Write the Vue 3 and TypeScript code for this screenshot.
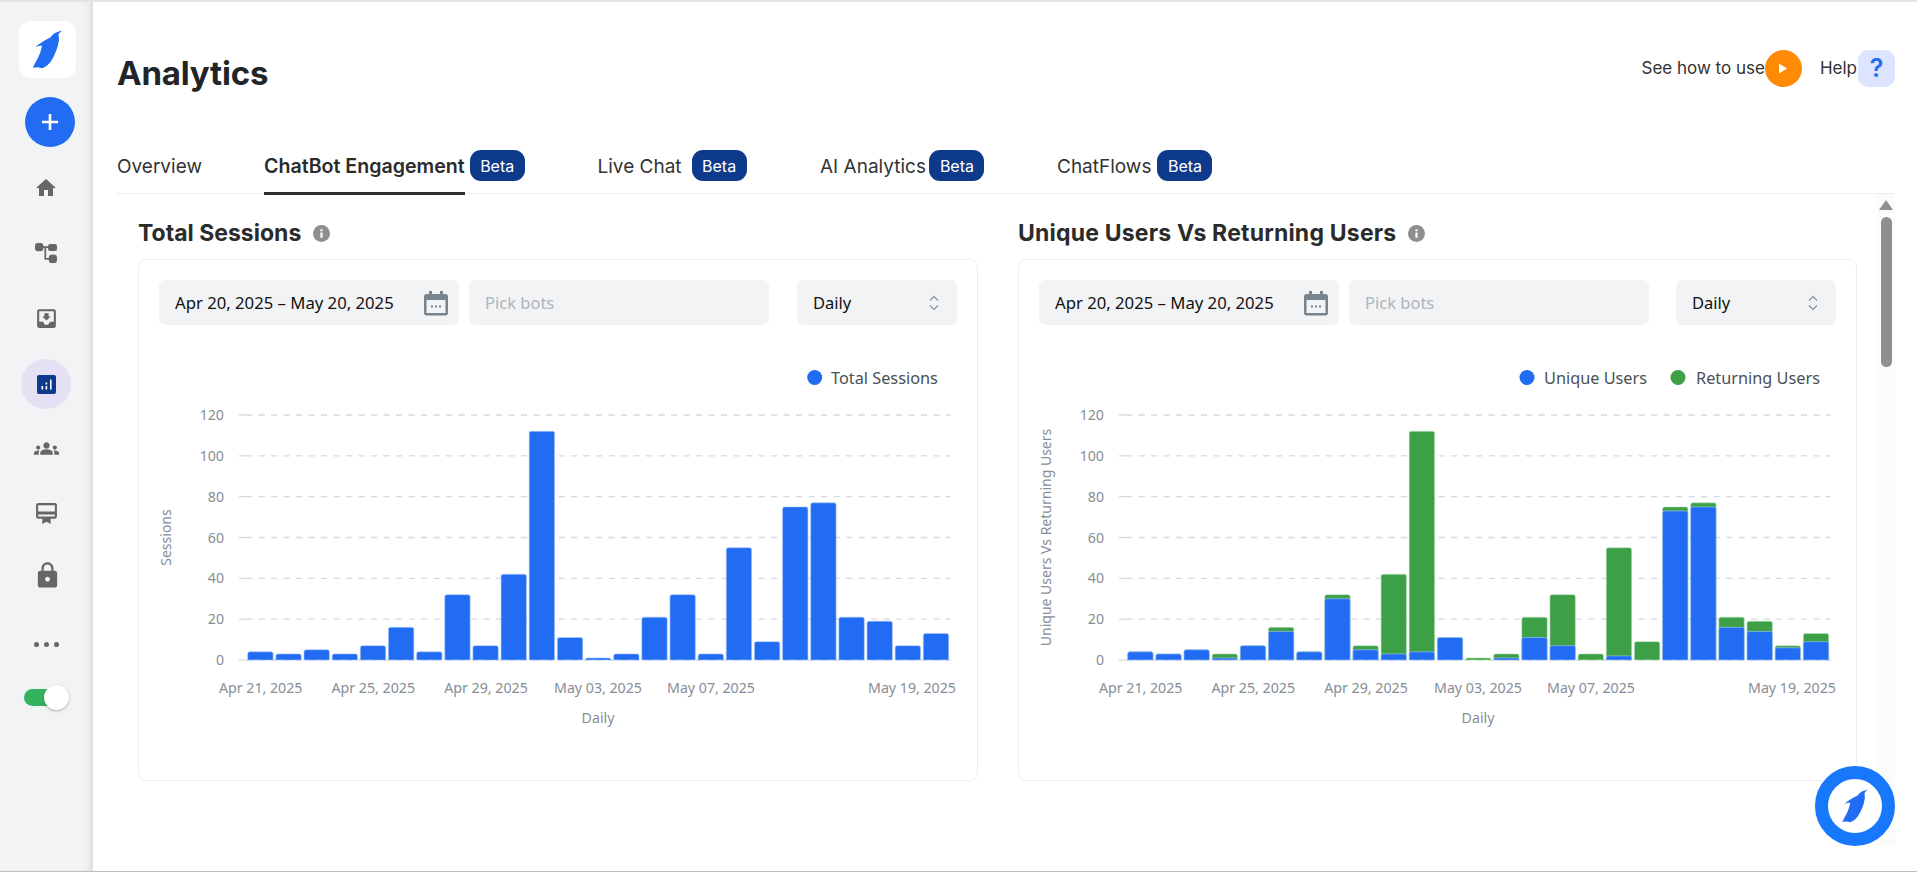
<script setup lang="ts">
interface Panel {
    title: string;
    yLabel: string;
    legend: { label: string; color: string; dot: number; text: number }[];
    unique?: number[];
}

const BLUE = '#226cf3';
const GREEN = '#3da047';

// chart geometry, in svg px
const baseY = 335;
const perUnit = 245 / 120;
const firstBar = 88.7;
const barStep = 28.15;
const barWidth = 25.4;

const totals = [4, 3, 5, 3, 7, 16, 4, 32, 7, 42, 112, 11, 1, 3, 21, 32, 3, 55, 9, 75, 77, 21, 19, 7, 13];
const unique = [4, 3, 5, 1, 7, 14, 4, 30, 5, 3, 4, 11, 0, 1, 11, 7, 0, 2, 0, 73, 75, 16, 14, 6, 9];

const yTicks = [120, 100, 80, 60, 40, 20, 0];
const xTicks = [
    { label: 'Apr 21, 2025', x: 101.7 },
    { label: 'Apr 25, 2025', x: 214.3 },
    { label: 'Apr 29, 2025', x: 327 },
    { label: 'May 03, 2025', x: 439 },
    { label: 'May 07, 2025', x: 552 },
    { label: 'May 19, 2025', x: 753 },
];

const panels: Panel[] = [
    {
        title: 'Total Sessions',
        yLabel: 'Sessions',
        legend: [{ label: 'Total Sessions', color: BLUE, dot: 655.7, text: 672 }],
    },
    {
        title: 'Unique Users Vs Returning Users',
        yLabel: 'Unique Users Vs Returning Users',
        legend: [
            { label: 'Unique Users', color: BLUE, dot: 488, text: 505 },
            { label: 'Returning Users', color: GREEN, dot: 639, text: 657 },
        ],
        unique,
    },
];

const tabs = [
    { label: 'Overview', cls: 'tab-overview' },
    { label: 'ChatBot Engagement', cls: 'tab-chatbot', beta: true, active: true },
    { label: 'Live Chat', cls: 'tab-live', beta: true },
    { label: 'AI Analytics', cls: 'tab-ai', beta: true },
    { label: 'ChatFlows', cls: 'tab-flows', beta: true },
];

const penguin =
    'M96 7 L75 15 Q66 20 62 28 Q48 35 40 40 Q27 48 15 58 Q28 53 36 54 Q33 72 24 90 Q18 100 8 120 L25 119 L34 122 Q50 118 62 102 Q82 72 87 38 Q88 26 85 20 Z';

const yOf = (value: number) => baseY - value * perUnit;

// bar with rounded top corners
const barPath = (index: number, value: number) => {
    const x = firstBar + index * barStep;
    const top = yOf(value);
    const r = Math.min(2, value * perUnit);
    return `M${x} ${baseY}V${top + r}Q${x} ${top} ${x + r} ${top}H${x + barWidth - r}Q${x + barWidth} ${top} ${x + barWidth} ${top + r}V${baseY}Z`;
};
</script>

<template>
    <div class="app">
        <aside class="sidebar">
            <div class="logo">
                <svg width="35" height="43" viewBox="0 0 105 130"><path :d="penguin" fill="#226cf3" /></svg>
            </div>
            <button class="add-btn" type="button">
                <svg width="20" height="20" viewBox="0 0 20 20"><path d="M10 2v16M2 10h16" stroke="#fff" stroke-width="2.6" /></svg>
            </button>
            <nav class="nav">
                <svg class="n-home" width="24" height="24" viewBox="0 0 24 24"><path d="M10 20v-6h4v6h5v-8h3L12 3 2 12h3v8z" /></svg>
                <svg class="n-flow" width="22" height="20" viewBox="0 0 64 58">
                    <rect x="0" y="0" width="24" height="24" rx="8" />
                    <rect x="38" y="3" width="26" height="20" rx="6" />
                    <rect x="40" y="33" width="24" height="26" rx="10" />
                    <path d="M20 12H42M30 12V46H44" fill="none" stroke="#666" stroke-width="5" />
                </svg>
                <svg class="n-inbox" width="25" height="25" viewBox="0 0 24 24"><path d="M19 3H5c-1.1 0-2 .9-2 2v14c0 1.1.9 2 2 2h14c1.1 0 2-.9 2-2V5c0-1.1-.9-2-2-2zm0 12h-4c0 1.66-1.35 3-3 3s-3-1.34-3-3H4.99V5H19v10zm-3-5h-2V7h-4v3H8l4 4 4-4z" /></svg>
                <div class="n-active">
                    <svg width="19" height="19" viewBox="0 0 19 19">
                        <rect width="19" height="19" rx="2" fill="#0e3a8c" />
                        <path d="M4.5 11h1.6v3.5H4.5zM8.6 7.5h1.6v2H8.6zM8.6 11h1.6v3.5H8.6zM13 4.5h1.6v10H13z" fill="#fff" />
                    </svg>
                </div>
                <svg class="n-team" width="25" height="25" viewBox="0 0 24 24"><path d="M12 12.75c1.63 0 3.07.39 4.24.9 1.08.48 1.76 1.56 1.76 2.73V18H6v-1.61c0-1.18.68-2.26 1.76-2.73 1.17-.52 2.61-.91 4.24-.91zM4 13c1.1 0 2-.9 2-2s-.9-2-2-2-2 .9-2 2 .9 2 2 2zm1.13 1.1c-.37-.06-.74-.1-1.13-.1-.99 0-1.93.21-2.78.58C.48 14.9 0 15.62 0 16.43V18h4.5v-1.61c0-.83.23-1.61.63-2.29zM20 13c1.1 0 2-.9 2-2s-.9-2-2-2-2 .9-2 2 .9 2 2 2zm4 3.43c0-.81-.48-1.53-1.22-1.85-.85-.37-1.79-.58-2.78-.58-.39 0-.76.04-1.13.1.4.68.63 1.46.63 2.29V18H24v-1.57zM12 6c1.66 0 3 1.34 3 3s-1.34 3-3 3-3-1.34-3-3 1.34-3 3-3z" /></svg>
                <svg class="n-card" width="25" height="25" viewBox="0 0 24 24"><path d="M20 2H4c-1.11 0-2 .89-2 2v11c0 1.11.89 2 2 2h4v5l4-2 4 2v-5h4c1.11 0 2-.89 2-2V4c0-1.11-.89-2-2-2zm0 13H4v-2h16v2zm0-5H4V4h16v6z" /></svg>
                <svg class="n-lock" width="29" height="29" viewBox="0 0 24 24"><path d="M18 8h-1V6c0-2.76-2.24-5-5-5S7 3.24 7 6v2H6c-1.1 0-2 .9-2 2v10c0 1.1.9 2 2 2h12c1.1 0 2-.9 2-2V10c0-1.1-.9-2-2-2zm-6 9c-1.1 0-2-.9-2-2s.9-2 2-2 2 .9 2 2-.9 2-2 2zm3.1-9H8.9V6c0-1.71 1.39-3.1 3.1-3.1 1.71 0 3.1 1.39 3.1 3.1v2z" /></svg>
                <div class="n-dots"><i></i><i></i><i></i></div>
            </nav>
            <div class="toggle"><span class="knob"></span></div>
        </aside>

        <main class="main">
            <header class="header">
                <h1>Analytics</h1>
                <div class="header-actions">
                    <span>See how to use</span>
                    <span class="play">
                        <svg width="10" height="11" viewBox="0 0 10 11"><path d="M1 0.5 9 5.5 1 10.5Z" fill="#fff" /></svg>
                    </span>
                    <span class="help-label">Help</span>
                    <span class="help">?</span>
                </div>
            </header>

            <div class="tabs">
                <div v-for="tab in tabs" :key="tab.label" class="tab" :class="tab.cls">
                    <span class="tab-label" :class="{ active: tab.active }">{{ tab.label }}</span>
                    <span v-if="tab.beta" class="beta">Beta</span>
                </div>
            </div>

            <div class="content">
                <div class="panels">
                    <section v-for="panel in panels" :key="panel.title" class="panel">
                        <h2>
                            {{ panel.title }}
                            <svg width="17" height="17" viewBox="0 0 17 17">
                                <circle cx="8.5" cy="8.5" r="8.5" fill="#8f8f8f" />
                                <path d="M7.4 7.4h2.2v5.4H7.4zM7.4 4.2h2.2v2H7.4z" fill="#fff" />
                            </svg>
                        </h2>
                        <div class="card">
                            <div class="controls">
                                <div class="field date">
                                    <span>Apr 20, 2025 – May 20, 2025</span>
                                    <svg width="24" height="26" viewBox="0 0 24 26">
                                        <path d="M5 1h3v3h8V1h3v3h2.5A2.5 2.5 0 0 1 24 6.500V23a2.500 2.500 0 0 1-2.500 2.500h-19A2.500 2.500 0 0 1 0 23V6.500A2.500 2.500 0 0 1 2.500 4H5zM2.500 10v13h19V10z" fill="#7a848d" />
                                        <path d="M7 15.500h2v2H7zM11 15.500h2v2h-2zM15 15.500h2v2h-2z" fill="#7a848d" />
                                    </svg>
                                </div>
                                <div class="field bots">Pick bots</div>
                                <div class="field daily">
                                    <span>Daily</span>
                                    <svg width="12" height="18" viewBox="0 0 12 18"><path d="M2 6.500 6 2.500 10 6.500M2 11.500 6 15.500 10 11.500" fill="none" stroke="#868e96" stroke-width="1.100" /></svg>
                                </div>
                            </div>

                            <svg class="chart" width="797" height="434" viewBox="0 0 797 434">
                                <g v-for="item in panel.legend" :key="item.label">
                                    <circle :cx="item.dot" cy="52.500" r="7.500" :fill="item.color" />
                                    <text :x="item.text" y="59" class="legend-text">{{ item.label }}</text>
                                </g>

                                <g v-for="tick in yTicks" :key="tick">
                                    <line x1="80" x2="87" :y1="yOf(tick)" :y2="yOf(tick)" class="grid-tick" />
                                    <line x1="87" x2="791.700" :y1="yOf(tick)" :y2="yOf(tick)" class="grid-line" />
                                    <text x="65" :y="yOf(tick) + 5" text-anchor="end" class="axis-text">{{ tick }}</text>
                                </g>

                                <text :transform="`translate(12 212.500) rotate(-90)`" text-anchor="middle" class="axis-text small">{{ panel.yLabel }}</text>

                                <g v-for="(total, i) in totals" :key="i" class="bar">
                                    <template v-if="panel.unique">
                                        <path :d="barPath(i, total)" fill="#3da047" stroke="#b7e3bd" />
                                        <path v-if="panel.unique[i] > 0" :d="barPath(i, panel.unique[i])" fill="#226cf3" stroke="#a9c8fb" />
                                    </template>
                                    <path v-else :d="barPath(i, total)" fill="#226cf3" stroke="#a9c8fb" />
                                </g>

                                <text v-for="tick in xTicks" :key="tick.label" :x="tick.x" y="368" text-anchor="middle" class="axis-text">{{ tick.label }}</text>
                                <text x="439" y="397.500" text-anchor="middle" class="axis-text">Daily</text>
                            </svg>
                        </div>
                    </section>
                </div>

                <div class="rail">
                    <svg width="14" height="10" viewBox="0 0 14 10"><path d="M7 0 14 10H0Z" fill="#8f8f8f" /></svg>
                    <div class="thumb"></div>
                </div>
            </div>
        </main>

        <div class="chat-bubble">
            <svg width="30" height="38" viewBox="0 0 105 130"><path :d="penguin" fill="#226cf3" /></svg>
        </div>
    </div>
</template>

<style>
html,
body {
    margin: 0;
    height: 100%;
    overflow: hidden;
    background: #fff;
}
</style>

<style scoped>
.app {
    position: relative;
    display: flex;
    box-sizing: border-box;
    width: 1917px;
    height: 872px;
    border-top: 2px solid #e4e4e4;
    border-bottom: 1px solid #bdbdbd;
    font-family: 'Noto Sans', sans-serif;
    overflow: hidden;
}

.sidebar {
    display: flex;
    flex-direction: column;
    align-items: center;
    box-sizing: border-box;
    width: 93px;
    flex-shrink: 0;
    padding-top: 19px;
    background: #f1f3f5;
    box-shadow: inset -6px 0 6px -4px rgba(0, 0, 0, 0.12);
}

.logo {
    display: flex;
    align-items: center;
    justify-content: center;
    width: 57px;
    height: 57px;
    margin-left: 2px;
    border-radius: 12px;
    background: #fff;
}

.add-btn {
    display: flex;
    align-items: center;
    justify-content: center;
    width: 50px;
    height: 50px;
    margin: 19px 0 0 7px;
    padding: 0;
    border: none;
    border-radius: 50%;
    background: #226cf3;
}

.nav {
    display: flex;
    flex-direction: column;
    align-items: center;
    margin-right: 1px;
    fill: #666;
}

.n-home { margin-top: 29px; }
.n-flow { margin-top: 43px; }
.n-inbox { margin-top: 43px; }
.n-active {
    display: flex;
    align-items: center;
    justify-content: center;
    width: 50px;
    height: 50px;
    margin-top: 28px;
    border-radius: 50%;
    background: #e5e0f3;
}
.n-team { margin-top: 27px; }
.n-card { margin-top: 40px; }
.n-lock { margin: 35px 0 0 2px; }
.n-dots {
    display: flex;
    gap: 5px;
    margin-top: 52px;
}
.n-dots i {
    width: 5px;
    height: 5px;
    border-radius: 50%;
    background: #666;
}

.toggle {
    display: flex;
    align-items: center;
    width: 45px;
    height: 17px;
    margin-top: 42px;
    border-radius: 9px;
    background: linear-gradient(to right, #34b35f 80%, transparent 80%);
}
.knob {
    width: 25px;
    height: 25px;
    margin-left: 20px;
    border-radius: 50%;
    background: #fff;
    box-shadow: 0 1px 3px rgba(0, 0, 0, 0.3);
}

.main {
    flex: 1;
    min-width: 0;
    padding: 0 22px 0 24px;
}

.header {
    display: flex;
    justify-content: space-between;
    height: 148px;
    color: #222;
}

h1 {
    margin: 51px 0 0;
    font: 700 33px/40px Inter, sans-serif;
    letter-spacing: -0.2px;
    color: #212529;
}

.header-actions {
    display: flex;
    align-items: flex-start;
    height: 37px;
    margin-top: 48px;
    font: 400 17px/37px Inter, sans-serif;
    color: #333;
}

.play {
    display: flex;
    align-items: center;
    justify-content: center;
    width: 37px;
    height: 37px;
    border-radius: 50%;
    background: #ff8a05;
}

.help-label {
    margin-left: 18px;
}

.help {
    width: 37px;
    height: 37px;
    margin-left: 1px;
    border-radius: 10px;
    background: #dde4ff;
    color: #226cf3;
    font: 600 25px/37px Inter, sans-serif;
    text-align: center;
}

.tabs {
    display: flex;
    height: 44px;
    box-sizing: border-box;
    border-bottom: 1px solid #eceef0;
    font: 400 19px/33px Inter, sans-serif;
    color: #333;
}

.tab {
    display: flex;
    align-items: flex-start;
    flex-shrink: 0;
}
.tab-overview { width: 147px; }
.tab-chatbot { width: 333.5px; gap: 5px; }
.tab-live { width: 222.5px; gap: 10px; }
.tab-ai { width: 237px; gap: 3.5px; }
.tab-flows { gap: 6px; }

.tab-label {
    height: 45px;
    box-sizing: border-box;
}
.tab-label.active {
    border-bottom: 3px solid #2f2f2f;
    font-size: 19.6px;
    font-weight: 600;
    color: #2b2b2b;
}

.beta {
    width: 55px;
    height: 31px;
    border-radius: 11px;
    background: #0e3a8c;
    color: #fff;
    font-size: 16px;
    line-height: 32px;
    text-align: center;
}

.content {
    display: flex;
}

.panels {
    flex: 1;
    display: grid;
    grid-template-columns: 840px 839px;
    column-gap: 40px;
    padding-left: 21px;
}

h2 {
    display: flex;
    align-items: center;
    gap: 12px;
    height: 32px;
    margin: 23px 0 10px;
    font: 700 23px/32px Inter, sans-serif;
    color: #2b2b2b;
}
.panel + .panel h2 {
    letter-spacing: 0.2px;
}

.card {
    box-sizing: border-box;
    height: 522px;
    padding: 20px;
    border: 1px solid #eceef0;
    border-radius: 8px;
}

.controls {
    display: flex;
    gap: 10px;
}

.field {
    display: flex;
    align-items: center;
    justify-content: space-between;
    box-sizing: border-box;
    height: 45px;
    padding: 0 16px;
    border-radius: 6px;
    background: #f1f3f5;
    font-size: 16.5px;
    color: #111;
}

.date {
    width: 300px;
    padding-right: 11px;
    font-size: 16.7px;
}

.bots {
    width: 300px;
    color: #adb5bd;
}

.daily {
    width: 160px;
    margin-left: auto;
    padding-right: 17px;
}

.chart {
    display: block;
    overflow: visible;
}

.grid-tick {
    stroke: #d6d9dd;
    stroke-width: 1.3;
}

.grid-line {
    stroke: #d6d9dd;
    stroke-width: 1.3;
    stroke-dasharray: 6.25 6.25;
}

.axis-text {
    font-size: 14.2px;
    fill: #868e96;
}
.axis-text.small {
    font-size: 14px;
}

.legend-text {
    font-size: 16.3px;
    fill: #495057;
}

.bar path {
    stroke-width: 0.6;
}

.rail {
    display: flex;
    flex-direction: column;
    align-items: center;
    width: 18px;
    height: 652px;
    padding-top: 6px;
    box-sizing: border-box;
    background: #fbfbfb;
}

.thumb {
    width: 11px;
    height: 150px;
    margin-top: 7px;
    border-radius: 6px;
    background: #8f8f8f;
}

.chat-bubble {
    position: absolute;
    right: 22px;
    bottom: 25px;
    display: flex;
    align-items: center;
    justify-content: center;
    box-sizing: border-box;
    width: 80px;
    height: 80px;
    border: 13px solid #1778fb;
    border-radius: 50%;
    background: #fff;
}
</style>
